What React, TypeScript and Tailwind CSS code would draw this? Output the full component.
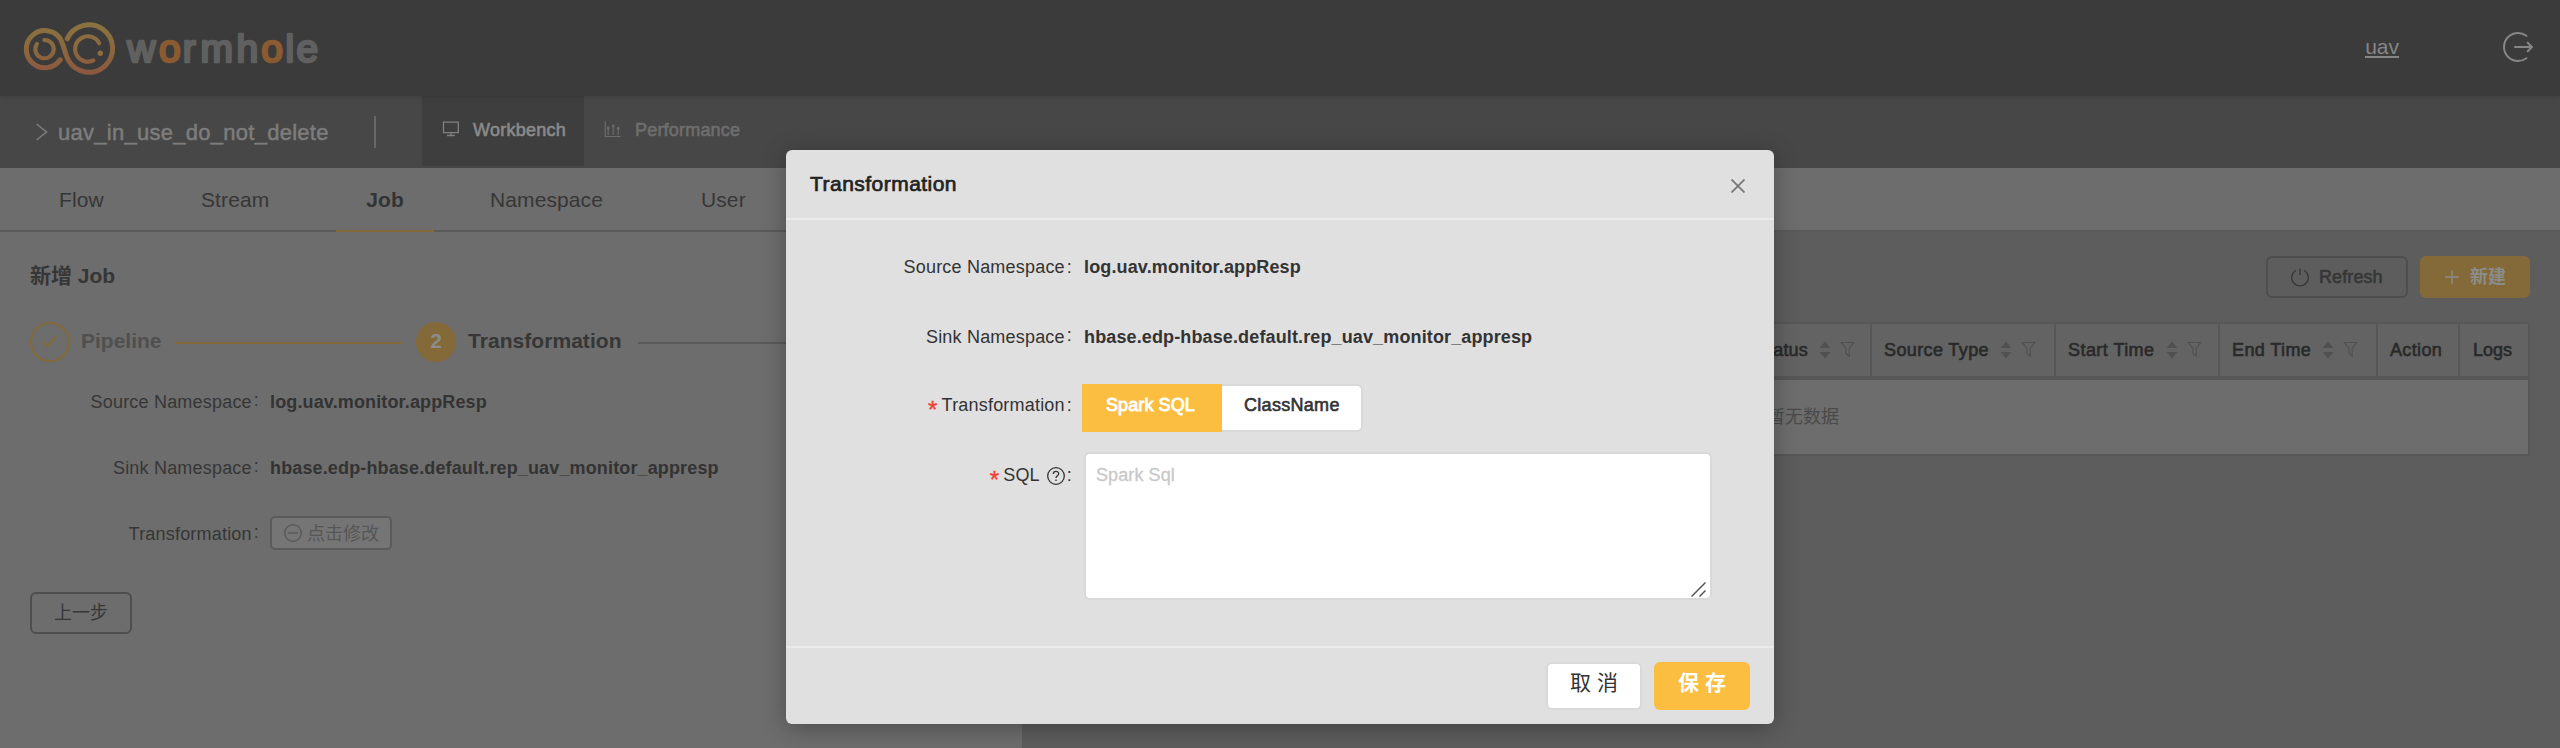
import type { ReactNode } from 'react';

const medium = '[-webkit-text-stroke:0.6px_currentColor]';

function Logo() {
  return (
    <svg width="310" height="60" viewBox="20 18 310 60" fill="none" className="block">
      <defs>
        <linearGradient id="ring" gradientUnits="userSpaceOnUse" x1="0" y1="22" x2="0" y2="76">
          <stop offset="0" stopColor="#8a7340" />
          <stop offset="0.5" stopColor="#8a683e" />
          <stop offset="1" stopColor="#8c5540" />
        </linearGradient>
      </defs>
      <g stroke="url(#ring)" strokeLinecap="round">
        <path
          strokeWidth="5"
          d="M60.2 59.8 A18.600 18.600 0 1 1 60.200 38.500 C64 45 64.500 53 68.500 60.500 A23.700 23.700 0 1 0 67.300 38.800"
        />
        <path strokeWidth="4" d="M44.300 39.900 A9.200 9.200 0 1 1 37 43.800" />
        <path strokeWidth="4" d="M99.200 43.300 A12.700 12.700 0 1 0 93.400 60.400" />
      </g>
      <circle cx="100.300" cy="53.300" r="2.700" fill="#8f6b40" />
      <text
        y="61.500"
        x="127.200 159.100 182.800 200.400 236.600 261.200 285.600 296.600"
        fontFamily="'Liberation Sans', sans-serif"
        fontSize="39"
        fill="#606060"
        stroke="#606060"
        strokeWidth="2.600"
        strokeLinejoin="round"
      >
        w<tspan fill="#8a5a30" stroke="#8a5a30">o</tspan>rmh
        <tspan fill="#8a5a30" stroke="#8a5a30">o</tspan>le
      </text>
    </svg>
  );
}

function LogoutIcon() {
  return (
    <svg width="32" height="32" viewBox="0 0 32 32" fill="none" stroke="#868686" strokeWidth="2" strokeLinecap="round" strokeLinejoin="round">
      <path d="M24.500 4.800 C22 3 19 1.900 16 1.900 C8.500 1.900 2 8 2 16 C2 24 8.500 30 16 30 C19 30 22 29 24.500 27.200" />
      <path d="M13 16 H30 M25.700 11.800 L30 16 L25.700 20.200" />
    </svg>
  );
}

function Header() {
  return (
    <header className="relative flex h-24 items-start bg-[#3b3b3b] shadow-[0_1px_5px_rgba(0,0,0,0.12)]">
      <div className="ml-5 mt-[18px] flex-1">
        <Logo />
      </div>
      <a className="mr-[103px] mt-[34px] h-6 border-b-2 border-[#868686] text-[21px] leading-[26px] text-[#868686]">uav</a>
      <div className="mr-[26px] mt-[31px]">
        <LogoutIcon />
      </div>
    </header>
  );
}

function SubNav() {
  return (
    <nav className="flex h-[72px] bg-[#474747]">
      <div className="flex w-[422px] items-center">
        <svg width="12" height="18" viewBox="0 0 12 18" fill="none" stroke="#7d7d7d" strokeWidth="1.600" className="ml-9">
          <path d="M0.500 1 L10.500 9 L0.500 17" />
        </svg>
        <span className="ml-[10px] text-[22px] tracking-[0.27px] text-[#7d7d7d] [-webkit-text-stroke:0.5px_currentColor]">uav_in_use_do_not_delete</span>
        <span className="ml-auto mr-[46px] h-8 w-0.5 bg-[#676767]" />
      </div>
      <div className="flex h-[70px] w-[162px] bg-[#3e3e3e] text-[#8a8a8a]">
        <svg width="18" height="16" viewBox="0 0 18 16" fill="none" stroke="#808080" strokeWidth="1.300" className="ml-5 mt-[25px]">
          <path d="M1.500 1.200 H16.300 V11.600 H1.500 Z M9 11.600 V14.300 M5 14.500 H12.800" />
        </svg>
        <span className={`ml-[13px] mt-[22px] text-[18px] leading-6 tracking-[0.25px] ${medium}`}>Workbench</span>
      </div>
      <div className="flex text-[#6e6e6e]">
        <svg width="18" height="18" viewBox="0 0 18 18" fill="none" stroke="#6e6e6e" strokeWidth="1.100" className="ml-5 mt-[24px]">
          <path d="M1.200 1.500 V16.500 H16.500 M4.200 8 V15 M9.200 6.500 V15 M14.200 8.500 V15" />
          <circle cx="4.200" cy="8" r="0.900" />
          <circle cx="9.200" cy="6" r="0.900" />
          <circle cx="14.200" cy="8.500" r="0.900" />
        </svg>
        <span className={`ml-[13px] mt-[22px] text-[18px] leading-6 tracking-[0.2px] ${medium}`}>Performance</span>
      </div>
    </nav>
  );
}

function Tabs() {
  return (
    <div className="flex h-16 border-b-2 border-[#5a5a5a] bg-[#6d6d6d] text-[21px] leading-[64px] tracking-[0.1px] text-[#363636]">
      <span className="w-[142px] pl-[59px]">Flow</span>
      <span className="w-[194px] pl-[59px]">Stream</span>
      <span className="h-16 w-[98px] border-b-2 border-[#846a38] text-center font-bold text-[#333333]">Job</span>
      <span className="w-[210px] pl-[56px]">Namespace</span>
      <span className="pl-[57px]">User</span>
    </div>
  );
}

function Field({ label, top, children }: { label: string; top: string; children: ReactNode }) {
  return (
    <div className={`flex h-9 items-center text-[18px] text-[#363636] ${top}`}>
      <div className="flex w-[259px] justify-end tracking-[0.2px]">
        {label}
        <span className="relative -top-0.5 ml-[2px]">:</span>
      </div>
      <div className="ml-[11px] font-bold tracking-[0.14px] text-[#333333]">{children}</div>
    </div>
  );
}

function JobForm() {
  return (
    <section className="w-[1022px] bg-[#6d6d6d]">
      <h2 className="ml-[30px] mt-[29px] text-[21px] leading-[30px] font-bold text-[#363636]">新增 Job</h2>
      <div className="mt-[31px] flex h-10 items-center text-[21px] font-bold">
        <span className="ml-[30px] flex size-10 items-center justify-center rounded-full border-2 border-[#846a38]">
          <svg width="16" height="14" viewBox="0 0 16 14" fill="none" stroke="#846a38" strokeWidth="2">
            <path d="M1.500 6 L5 11.500 L14.500 1.500" />
          </svg>
        </span>
        <span className="ml-[11px] mt-[-3px] w-[95px] text-[#505050]">Pipeline</span>
        <span className="mt-[2px] h-0.5 w-[226px] bg-[#846a38]" />
        <span className="ml-[14px] flex size-10 items-center justify-center rounded-full bg-[#846a38] text-[#8c8c8c]">
          <span className="mt-[-3px]">2</span>
        </span>
        <span className="ml-3 mt-[-3px] w-[170px] tracking-[0.05px] text-[#363636]">Transformation</span>
        <span className="mt-[2px] h-0.5 w-[226px] bg-[#5a5a5a]" />
      </div>
      <Field label="Source Namespace" top="mt-[22px]">log.uav.monitor.appResp</Field>
      <Field label="Sink Namespace" top="mt-[30px]">hbase.edp-hbase.default.rep_uav_monitor_appresp</Field>
      <Field label="Transformation" top="mt-[30px]">
        <button className="mt-[-2px] flex h-[34px] w-[122px] items-center rounded-[5px] border-2 border-[#5a5a5a] bg-[#757575] pl-3 text-[18px] font-normal tracking-normal text-[#565656]">
          <svg width="18" height="18" viewBox="0 0 18 18" fill="none" stroke="#565656" strokeWidth="1.300">
            <circle cx="9" cy="9" r="8.300" />
            <path d="M4 9 H14" />
          </svg>
          <span className="ml-[5px] mt-[-2px] font-['Noto_Sans_CJK_SC']">点击修改</span>
        </button>
      </Field>
      <button className="ml-[30px] mt-[40px] block h-[42px] w-[102px] rounded-[6px] border-2 border-[#4e4e4e] text-[18px] leading-[36px] text-[#363636]">上一步</button>
    </section>
  );
}

function SortFilter() {
  return (
    <svg width="36" height="18" viewBox="0 0 36 18" className="ml-[11px]">
      <path d="M6 0.500 L11.300 7 H0.700 Z M6 17.500 L11.300 11 H0.700 Z" fill="#505050" />
      <path d="M22.300 1.500 H34.700 L30.200 7.500 V15.200 L27 12.500 V7.500 Z" fill="none" stroke="#505050" strokeWidth="1.200" />
    </svg>
  );
}

function Column({ title, width, sortable = false, tracking = '' }: { title: string; width: string; sortable?: boolean; tracking?: string }) {
  return (
    <div className={`flex items-center border-r-2 border-[#575757] pl-3 ${width}`}>
      <span className={`whitespace-nowrap ${tracking} ${medium}`}>{title}</span>
      {sortable && <SortFilter />}
    </div>
  );
}

function JobTable() {
  return (
    <section className="flex-1 bg-[#5d5d5d] pl-[54px] pr-[30px] pt-6">
      <div className="flex h-[42px] justify-end">
        <button className="flex w-[142px] items-center rounded-[6px] border-2 border-[#4e4e4e] pl-[23px] text-[18px] text-[#363636]">
          <svg width="18" height="19" viewBox="0 0 18 19" fill="none" stroke="#363636" strokeWidth="1.300">
            <path d="M5 2.300 A8.300 8.300 0 1 0 13 2.300 M9 0.500 V7" />
          </svg>
          <span className={`ml-[10px] tracking-[0.1px] ${medium}`}>Refresh</span>
        </button>
        <button className="ml-3 flex w-[110px] items-center rounded-[6px] bg-[#846a38] pl-[25px] text-[18px] font-bold text-[#8c8c8c]">
          <svg width="14" height="14" viewBox="0 0 14 14" stroke="#8c8c8c" strokeWidth="1.300">
            <path d="M0 7 H14 M7 0 V14" />
          </svg>
          <span className="ml-[11px]">新建</span>
        </button>
      </div>
      <div className="mt-6 h-[134px] rounded-t-[6px] border-2 border-l-0 border-[#575757] bg-[#6d6d6d]">
        <div className="flex h-14 justify-end border-b-4 border-[#575757] bg-[#636363] text-[18px] text-[#292929]">
          <Column title="Status" width="w-[128px]" sortable tracking="tracking-[0.15px]" />
          <Column title="Source Type" width="w-[184px]" sortable tracking="tracking-[0.38px]" />
          <Column title="Start Time" width="w-[164px]" sortable tracking="tracking-[0.45px]" />
          <Column title="End Time" width="w-[158px]" sortable tracking="tracking-[0.4px]" />
          <Column title="Action" width="w-[82px]" tracking="tracking-[0.35px]" />
          <div className={`flex w-[68px] items-center pl-[13px] ${medium}`}>Logs</div>
        </div>
        <div className="pl-0.5 text-center text-[18px] leading-[74px] text-[#4a4a4a]">暂无数据</div>
      </div>
    </section>
  );
}

function ModalLabel({ text, required = false, raised = false, help = false }: { text: string; required?: boolean; raised?: boolean; help?: boolean }) {
  return (
    <div className="flex w-[286px] items-center justify-end tracking-[0.2px]">
      {required && <span className="mr-[4px] mt-[9px] h-7 text-[24px] leading-7 text-[#f04134] [-webkit-text-stroke:0.4px_currentColor]">*</span>}
      {text}
      {help && (
        <svg width="18" height="18" viewBox="0 0 18 18" fill="none" stroke="#333333" strokeWidth="1.300" className="ml-[7px]">
          <circle cx="9" cy="9" r="8.300" />
          <path d="M6.300 7 C6.300 3.500 11.700 3.500 11.700 6.700 C11.700 8.800 9 8.700 9 11 M9 12.500 V14" />
        </svg>
      )}
      <span className={raised ? 'relative -top-0.5 ml-[2px]' : 'ml-[2px]'}>:</span>
    </div>
  );
}

function TransformationModal() {
  return (
    <div className="absolute left-[786px] top-[150px] flex h-[574px] w-[988px] flex-col rounded-[6px] bg-[#e0e0e0] text-[18px] text-[#333333] shadow-[0_4px_24px_rgba(0,0,0,0.3)]">
      <div className="flex h-[70px] items-start border-b-2 border-[#ebebeb]">
        <h3 className="ml-6 mt-[22px] flex-1 text-[21px] leading-6 tracking-[0.47px] text-[#222222] [-webkit-text-stroke:0.7px_currentColor]">Transformation</h3>
        <svg width="14" height="14" viewBox="0 0 14 14" stroke="#777777" strokeWidth="1.800" className="mr-[29px] mt-[29px]">
          <path d="M0.500 0.500 L13.500 13.500 M13.500 0.500 L0.500 13.500" />
        </svg>
      </div>
      <div className="mt-[29px] flex h-9 items-center">
        <ModalLabel text="Source Namespace" />
        <span className="ml-3 font-bold tracking-[0.14px]">log.uav.monitor.appResp</span>
      </div>
      <div className="mt-[34px] flex h-9 items-center">
        <ModalLabel text="Sink Namespace" raised />
        <span className="ml-3 font-bold tracking-[0.13px]">hbase.edp-hbase.default.rep_uav_monitor_appresp</span>
      </div>
      <div className="mt-[29px] flex h-12">
        <div className="flex h-[43px]">
          <ModalLabel text="Transformation" required />
        </div>
        <div className={`ml-[10px] flex w-[281px] leading-[43px] ${medium}`}>
          <span className="w-[140px] bg-[#fbbe40] pl-6 tracking-[0.1px] text-[#ffffff] [-webkit-text-stroke:0.9px_currentColor]">Spark SQL</span>
          <span className="flex-1 rounded-r-[6px] border-y-2 border-r-2 border-[#d9d9d9] bg-white pl-[22px] leading-[39px] tracking-[0.3px]">ClassName</span>
        </div>
      </div>
      <div className="mt-5 flex h-[148px]">
        <div className="flex h-[47px]">
          <ModalLabel text="SQL" required help />
        </div>
        <div className="ml-3 flex w-[628px] items-start rounded-[6px] border-2 border-[#d9d9d9] bg-white pl-[10px]">
          <span className="flex-1 leading-[43px] tracking-[0.1px] text-[#c8c8c8] [-webkit-text-stroke:0.3px_currentColor]">Spark Sql</span>
          <svg width="15" height="15" viewBox="0 0 15 15" stroke="#555555" strokeWidth="1.500" className="mr-1 mb-px self-end">
            <path d="M0.500 14.500 L14.500 0.500 M8.500 14.500 L14.500 8.500" />
          </svg>
        </div>
      </div>
      <div className="mt-auto flex h-[78px] border-t-2 border-[#ebebeb] pt-[14px] text-[21px] leading-[36px]">
        <button className="ml-[760px] h-12 w-[96px] rounded-[6px] border-2 border-[#d9d9d9] bg-white pb-1.5">取 消</button>
        <button className="ml-3 h-12 w-[96px] rounded-[6px] bg-[#fbbe40] pb-1.5 font-bold text-white">保 存</button>
      </div>
    </div>
  );
}

export default function App() {
  return (
    <div className="relative flex h-[748px] w-[2560px] flex-col overflow-hidden bg-[#5d5d5d] font-['Liberation_Sans','Noto_Sans_CJK_SC',sans-serif]">
      <Header />
      <SubNav />
      <Tabs />
      <main className="flex flex-1">
        <JobForm />
        <JobTable />
      </main>
      <TransformationModal />
    </div>
  );
}
